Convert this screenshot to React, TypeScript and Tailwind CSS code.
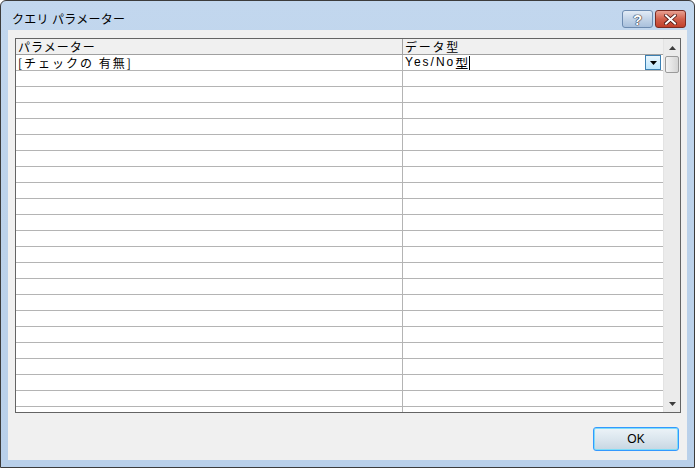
import React from "react";

const font = { fontFamily: '"Noto Sans CJK JP", "Liberation Sans", sans-serif' };

export default function App() {
  const rows = Array.from({ length: 22 });
  return (
    <div className="w-[695px] h-[468px] bg-[#ffffff] overflow-hidden" style={font}>
      <div className="w-[695px] h-[468px] border border-[#3c3c3c] bg-gradient-to-b from-[#c2d7ee] via-[#bcd2ea] to-[#b9d0ea] flex flex-col rounded-tl-[6px] rounded-tr-[6px]">
        {/* Title bar */}
        <div className="h-[29px] flex items-start relative shrink-0">
          <div className="pl-[11px] pt-[10px] text-[12px] leading-[16px] tracking-[0.3px] text-black">クエリ パラメーター</div>
          <div className="absolute left-[621px] top-[9px] flex gap-[2px]">
            <div className="w-[31px] h-[18px] rounded-[3px] border border-[#6d8bb0] bg-gradient-to-b from-[#e3ecf6] via-[#c3d4e8] to-[#a9c0dc] flex items-center justify-center text-[15px] font-bold text-white leading-none" style={{ fontFamily: '"Liberation Sans", sans-serif', textShadow: "0 0 1px #223, 0 0 1px #223, 0 0 1px #223" }}>
              ?
            </div>
            <div className="w-[31px] h-[18px] rounded-[3px] border border-[#7a2b22] bg-gradient-to-b from-[#e8a092] via-[#d1604c] to-[#c2402a] flex items-center justify-center">
              <svg width="13" height="11" viewBox="0 0 13 11">
                <path d="M2 1.5 L11 9.5 M11 1.5 L2 9.5" stroke="#4a1410" strokeWidth="3.6" strokeLinecap="square" />
                <path d="M2 1.5 L11 9.5 M11 1.5 L2 9.5" stroke="#ffffff" strokeWidth="2" strokeLinecap="square" />
              </svg>
            </div>
          </div>
        </div>
        {/* Client area */}
        <div className="mx-[7px] mb-[7px] flex-1 bg-[#f0f0f0] border-b border-[#f0f0f0] flex flex-col pl-[7px] pr-[7px] pt-[8px]">
          <div className="w-[666px] h-[375px] border border-[#646464] bg-white flex overflow-hidden">
            <div className="flex-1 flex flex-col overflow-hidden">
              {/* Header */}
              <div className="h-[16px] shrink-0 flex bg-[#f0f0f0] border-b border-[#a0a0a0] text-[12px] leading-[15px] text-black">
                <div className="w-[387px] pl-[2px] border-r border-[#a0a0a0] tracking-[1px]">パラメーター</div>
                <div className="flex-1 pl-[2px] tracking-[1.75px]">データ型</div>
              </div>
              {/* First row */}
              <div className="h-[16px] shrink-0 flex border-b border-[#b4b4b4] text-[12px] leading-[15px] text-black">
                <div className="w-[387px] pl-[2px] border-r border-[#b4b4b4] tracking-[2px]">[チェックの 有無]</div>
                <div className="flex-1 pl-[2px] flex items-center">
                  <span className="tracking-[2px]" style={{ fontFamily: '"Liberation Sans", sans-serif' }}>Yes/No</span>
                  <span className="text-[13px]">型</span>
                  <span className="w-[1px] h-[14px] bg-black ml-[1px]" />
                  <div className="ml-auto mr-[2px] w-[16px] h-[15px] border border-[#3c7fb1] bg-gradient-to-b from-[#eaf6fd] to-[#bee6fd] flex items-center justify-center">
                    <svg width="7" height="4" viewBox="0 0 7 4">
                      <path d="M0 0 H7 L3.5 4 Z" fill="#000" />
                    </svg>
                  </div>
                </div>
              </div>
              {rows.map((_, i) => (
                <div key={i} className="h-[16px] shrink-0 flex border-b border-[#b4b4b4]">
                  <div className="w-[387px] border-r border-[#b4b4b4]" />
                  <div className="flex-1" />
                </div>
              ))}
            </div>
            {/* Scrollbar */}
            <div className="w-[17px] shrink-0 bg-[#ebebeb] border-l border-[#e3e3e3] flex flex-col">
              <div className="h-[17px] flex items-center justify-center">
                <svg width="7" height="4" viewBox="0 0 7 4">
                  <path d="M3.5 0 L7 4 H0 Z" fill="#3c3c3c" />
                </svg>
              </div>
              <div className="mx-[1px] h-[17px] rounded-[2px] border border-[#9a9a9a] bg-gradient-to-r from-[#f3f3f3] via-[#e4e4e4] to-[#d4d4d4]" />
              <div className="flex-1" />
              <div className="h-[17px] flex items-center justify-center">
                <svg width="7" height="4" viewBox="0 0 7 4">
                  <path d="M0 0 H7 L3.5 4 Z" fill="#3c3c3c" />
                </svg>
              </div>
            </div>
          </div>
          <div className="flex justify-end mt-[14px] pr-[1px]">
            <div className="w-[86px] h-[24px] rounded-[3px] border border-[#3399ff] shadow-[inset_0_0_0_1px_#7fdcf7] bg-gradient-to-b from-[#ecf3f8] via-[#dbe6ee] to-[#c7d6e2] flex items-center justify-center text-[12px] text-black" style={{ fontFamily: '"Liberation Sans", sans-serif' }}>
              OK
            </div>
          </div>
        </div>
      </div>
    </div>
  );
}
